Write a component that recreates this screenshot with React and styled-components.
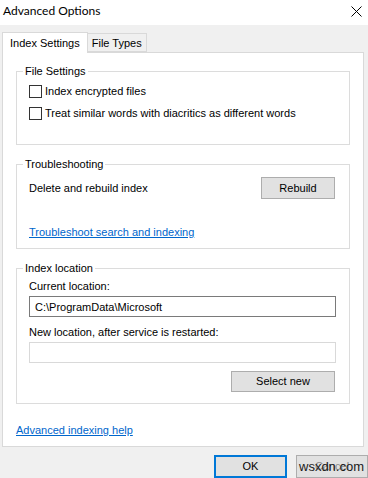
import React from "react";
import styled, { createGlobalStyle } from "styled-components";

const Global = createGlobalStyle`
  html, body { margin: 0; padding: 0; background: #f0f0f0; }
  body { font-family: Tahoma, "Liberation Sans", Arial, sans-serif; font-size: 11px; color: #000; }
  * { box-sizing: border-box; }
`;

const Window = styled.div`
  width: 368px;
  height: 478px;
  background: #f0f0f0;
  display: flex;
  flex-direction: column;
  overflow: hidden;
`;

const TitleBar = styled.div`
  height: 25px;
  background: #fff;
  display: flex;
  align-items: center;
  justify-content: space-between;
  padding: 0 3px 3px 3px;
`;

const Title = styled.span`
  font-family: "Segoe UI", Lato, sans-serif;
  font-size: 12px;
  line-height: 16px;
`;

const Close = styled.svg`
  width: 11px;
  height: 11px;
  margin-right: 3px;
`;

const TabStrip = styled.div`
  display: flex;
  align-items: flex-end;
  height: 27px;
  padding-left: 2px;
  position: relative;
  z-index: 1;
`;

const Tab = styled.div`
  height: ${(p) => (p.$active ? "21px" : "19px")};
  padding: 0 ${(p) => (p.$active ? "7px" : "4px")};
  margin-bottom: ${(p) => (p.$active ? "-1px" : "0")};
  background: ${(p) => (p.$active ? "#fff" : "#f0f0f0")};
  border: 1px solid #d9d9d9;
  border-bottom: ${(p) => (p.$active ? "none" : "1px solid #d9d9d9")};
  border-left: ${(p) => (p.$active ? "1px solid #d9d9d9" : "none")};
  display: flex;
  align-items: center;
  line-height: 16px;
  padding-top: ${(p) => (p.$active ? "0" : "1px")};
`;

const Panel = styled.div`
  margin-left: 2px;
  width: 362px;
  height: 395px;
  background: #fff;
  border: 1px solid #d9d9d9;
  padding: 11px 13px 10px 13px;
  display: flex;
  flex-direction: column;
  gap: 12px;
`;

const Group = styled.fieldset`
  margin: 0;
  padding: 0 13px 0 12px;
  border: 1px solid #dcdcdc;
  min-width: 0;
`;

const Legend = styled.legend`
  margin-left: -6px;
  padding: 0 2px;
  line-height: 14px;
  height: 14px;
`;

const CheckList = styled.div`
  display: flex;
  flex-direction: column;
  gap: 4px;
  padding: 4px 0 22px 0;
`;

const CheckRow = styled.label`
  display: flex;
  align-items: center;
  height: 18px;
  gap: 3px;
`;

const Box = styled.span`
  width: 13px;
  height: 13px;
  border: 1px solid #333;
  background: #fff;
  flex: none;
`;

const Text = styled.span`
  line-height: 16px;
  white-space: nowrap;
`;

const ActionRow = styled.div`
  display: flex;
  align-items: center;
  justify-content: space-between;
  padding-top: 6px;
  padding-right: 1px;
`;

const Button = styled.button`
  font: inherit;
  color: #000;
  width: ${(p) => p.$w || 74}px;
  height: ${(p) => p.$h || 22}px;
  background: #e1e1e1;
  border: 1px solid ${(p) => (p.$primary ? "#0078d7" : "#adadad")};
  box-shadow: ${(p) => (p.$primary ? "inset 0 0 0 1px #0078d7" : "none")};
  padding: 0 0 1px 0;
  line-height: 16px;
  position: relative;
`;

const Link = styled.a`
  color: #0066cc;
  text-decoration: underline;
  line-height: 16px;
  display: block;
  margin-top: ${(p) => p.$mt || 0}px;
  padding-bottom: ${(p) => p.$pb || 0}px;
`;

const FieldStack = styled.div`
  display: flex;
  flex-direction: column;
  padding: 4px 0 11px 0;
`;

const FieldLabel = styled.div`
  line-height: 14px;
  margin-bottom: 3px;
`;

const TextBox = styled.div`
  height: 21px;
  border: 1px solid ${(p) => (p.$disabled ? "#d9d9d9" : "#7a7a7a")};
  background: #fff;
  padding: 0 5px;
  display: flex;
  align-items: center;
  line-height: 16px;
  margin-bottom: ${(p) => p.$mb || 0}px;
`;

const RightRow = styled.div`
  display: flex;
  justify-content: flex-end;
  padding-right: 1px;
`;

const Footer = styled.div`
  display: flex;
  justify-content: flex-end;
  gap: 9px;
  padding-top: 8px;
`;

const Watermark = styled.span`
  position: absolute;
  left: 2px;
  top: 3px;
  font-size: 13px;
  color: #1a1a1a;
  pointer-events: none;
`;

const CancelText = styled.span`
  color: #8a8a8a;
`;

export default function App() {
  return (
    <>
      <Global />
      <Window>
        <TitleBar>
          <Title>Advanced Options</Title>
          <Close viewBox="0 0 11 11">
            <path d="M0.5 0.5 L10.5 10.5 M10.5 0.5 L0.5 10.5" stroke="#000" strokeWidth="1" fill="none" />
          </Close>
        </TitleBar>
        <TabStrip>
          <Tab $active>Index Settings</Tab>
          <Tab>File Types</Tab>
        </TabStrip>
        <Panel>
          <Group>
            <Legend>File Settings</Legend>
            <CheckList>
              <CheckRow>
                <Box />
                <Text>Index encrypted files</Text>
              </CheckRow>
              <CheckRow>
                <Box />
                <Text>Treat similar words with diacritics as different words</Text>
              </CheckRow>
            </CheckList>
          </Group>
          <Group>
            <Legend>Troubleshooting</Legend>
            <ActionRow>
              <Text>Delete and rebuild index</Text>
              <Button>Rebuild</Button>
            </ActionRow>
            <Link $mt={25} $pb={8}>Troubleshoot search and indexing</Link>
          </Group>
          <Group>
            <Legend>Index location</Legend>
            <FieldStack>
              <FieldLabel>Current location:</FieldLabel>
              <TextBox $mb={8}>C:\ProgramData\Microsoft</TextBox>
              <FieldLabel>New location, after service is restarted:</FieldLabel>
              <TextBox $disabled $mb={8} />
              <RightRow>
                <Button $w={104} $h={21}>Select new</Button>
              </RightRow>
            </FieldStack>
          </Group>
          <Link $mt={6}>Advanced indexing help</Link>
        </Panel>
        <Footer>
          <Button $primary $w={73} $h={23}>OK</Button>
          <Button $w={72} $h={23}>
            <CancelText>Cancel</CancelText>
            <Watermark>wsxdn.com</Watermark>
          </Button>
        </Footer>
      </Window>
    </>
  );
}
